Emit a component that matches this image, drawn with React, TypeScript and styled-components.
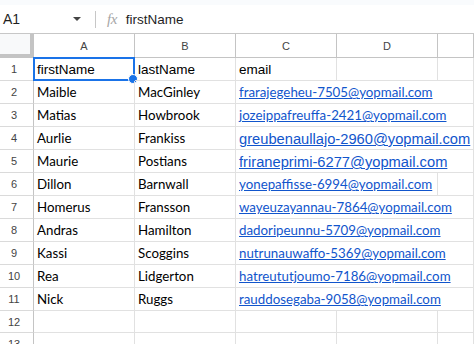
import * as React from "react";
import styled, { createGlobalStyle } from "styled-components";

type Row = {
  first: string;
  last: string;
  email: string;
  wide?: boolean; // email typed in a larger Arial
  span: "d" | "e"; // how far the email text overflows
};

const rows: Row[] = [
  { first: "Maible", last: "MacGinley", email: "frarajegeheu-7505@yopmail.com", span: "e" },
  { first: "Matias", last: "Howbrook", email: "jozeippafreuffa-2421@yopmail.com", span: "e" },
  { first: "Aurlie", last: "Frankiss", email: "greubenaullajo-2960@yopmail.com", wide: true, span: "e" },
  { first: "Maurie", last: "Postians", email: "friraneprimi-6277@yopmail.com", wide: true, span: "e" },
  { first: "Dillon", last: "Barnwall", email: "yonepaffisse-6994@yopmail.com", span: "d" },
  { first: "Homerus", last: "Fransson", email: "wayeuzayannau-7864@yopmail.com", span: "e" },
  { first: "Andras", last: "Hamilton", email: "dadoripeunnu-5709@yopmail.com", span: "e" },
  { first: "Kassi", last: "Scoggins", email: "nutrunauwaffo-5369@yopmail.com", span: "e" },
  { first: "Rea", last: "Lidgerton", email: "hatreututjoumo-7186@yopmail.com", span: "e" },
  { first: "Nick", last: "Ruggs", email: "rauddosegaba-9058@yopmail.com", span: "e" },
];

export default function App() {
  return (
    <>
      <GlobalStyle />
      <Page>
        <TopStrip />
        <FormulaBar>
          <NameBox>
            <span>A1</span>
            <Caret />
          </NameBox>
          <Divider />
          <Fx>fx</Fx>
          <FormulaText>firstName</FormulaText>
        </FormulaBar>

        <GridRow>
          <Corner />
          {["A", "B", "C", "D", "E"].map((c) => (
            <ColHead key={c}>{c === "E" ? "" : c}</ColHead>
          ))}
        </GridRow>

        <GridRow $h={23}>
          <RowHead>1</RowHead>
          <Cell $font="arial">
            firstName
            <Selection>
              <Handle />
            </Selection>
          </Cell>
          <Cell $font="arial">lastName</Cell>
          <Cell $font="arial">email</Cell>
          <Cell />
          <Cell />
        </GridRow>

        {rows.map((r, i) => (
          <GridRow key={r.email} $h={23}>
            <RowHead>{i + 2}</RowHead>
            <Cell>{r.first}</Cell>
            <Cell>{r.last}</Cell>
            <Cell $font={r.wide ? "arialLarge" : "calibri"} $span={r.span === "e" ? 3 : 2}>
              <Link>{r.email}</Link>
            </Cell>
            {r.span === "d" && <Cell />}
          </GridRow>
        ))}

        {[12, 13].map((n) => (
          <GridRow key={n} $h={22}>
            <RowHead>{n}</RowHead>
            <Cell />
            <Cell />
            <Cell />
            <Cell />
            <Cell />
          </GridRow>
        ))}
      </Page>
    </>
  );
}

//////////
// Style
//////////
const GlobalStyle = createGlobalStyle`
  html, body {
    margin: 0;
    padding: 0;
    background: #fff;
    overflow: hidden;
  }
  body {
    font-family: "Liberation Sans", Arial, sans-serif;
  }
`;

const Page = styled.div`
  width: 474px;
  height: 344px;
  overflow: hidden;
  background: #fff;
`;

const TopStrip = styled.div`
  height: 5px;
  background: #f9fbfd;
`;

const FormulaBar = styled.div`
  height: 28px;
  display: flex;
  align-items: center;
  border-bottom: 1px solid #c7c7c7;
`;

const NameBox = styled.div`
  width: 86px;
  padding-left: 3px;
  padding-right: 5px;
  box-sizing: border-box;
  display: flex;
  align-items: center;
  justify-content: space-between;
  font-size: 14px;
  color: #1f1f1f;
`;

const Caret = styled.div`
  width: 0;
  height: 0;
  border-left: 4px solid transparent;
  border-right: 4px solid transparent;
  border-top: 4px solid #444;
`;

const Divider = styled.div`
  width: 1px;
  height: 17px;
  background: #c7c7c7;
  margin-left: 9px;
`;

const Fx = styled.div`
  margin-left: 11px;
  font-family: "Liberation Serif", serif;
  font-style: italic;
  font-size: 15px;
  color: #a6a6a6;
  letter-spacing: -0.5px;
`;

const FormulaText = styled.div`
  margin-left: 9px;
  font-size: 13.5px;
  color: #1f1f1f;
`;

const GridRow = styled.div<{ $h?: number }>`
  display: grid;
  grid-template-columns: 34px 101px 101px 101px 101px 1fr;
  height: ${(p) => p.$h ?? 24}px;
`;

const Corner = styled.div`
  background: #f8f9fa;
  border-right: 4px solid #c4c4c4;
  border-bottom: 4px solid #c4c4c4;
`;

const ColHead = styled.div`
  display: flex;
  align-items: center;
  justify-content: center;
  padding-top: 1px;
  font-size: 11px;
  color: #444;
  border-right: 1px solid #c4c4c4;
  border-bottom: 1px solid #c4c4c4;
`;

const RowHead = styled.div`
  display: flex;
  align-items: center;
  justify-content: center;
  padding-left: 3px;
  padding-right: 8px;
  font-size: 11px;
  color: #444;
  border-right: 1px solid #c4c4c4;
  border-bottom: 1px solid #dadada;
`;

const fonts = {
  arial: `font-family: "Liberation Sans", Arial, sans-serif; font-size: 13.5px; padding-bottom: 2px;`,
  arialLarge: `font-family: "Liberation Sans", Arial, sans-serif; font-size: 14.7px; padding-bottom: 1px;`,
  calibri: `font-family: Lato, "Liberation Sans", sans-serif; font-size: 13.3px; padding-bottom: 2px;`,
};

const Cell = styled.div<{ $font?: keyof typeof fonts; $span?: number }>`
  position: relative;
  display: flex;
  align-items: flex-end;
  padding-left: 3px;
  white-space: nowrap;
  color: #000;
  border-right: 1px solid #e1e1e1;
  border-bottom: 1px solid #e1e1e1;
  line-height: 17px;
  ${(p) => fonts[p.$font ?? "calibri"]}
  ${(p) => (p.$span ? `grid-column: span ${p.$span};` : "")}
`;

const Link = styled.span`
  color: #1155cc;
  text-decoration: underline;
  text-underline-offset: 1px;
`;

const Selection = styled.div`
  position: absolute;
  left: -1px;
  top: -1px;
  right: -1px;
  bottom: -1px;
  border: 2px solid #1a73e8;
  pointer-events: none;
`;

const Handle = styled.div`
  position: absolute;
  right: -5px;
  bottom: -5px;
  width: 8px;
  height: 8px;
  border-radius: 50%;
  background: #1a73e8;
  border: 1px solid #fff;
`;
